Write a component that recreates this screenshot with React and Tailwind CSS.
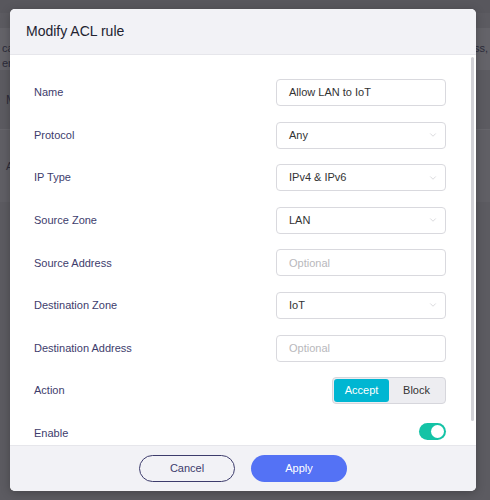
import { ChevronDown } from 'lucide-react';

const font = { fontFamily: '"Liberation Sans", Arial, sans-serif' };

function SelectBox({ value }) {
  return (
    <div className="w-[170px] h-[27px] border border-[#d9d9de] rounded-[4px] bg-white flex items-center justify-between pl-[12px] pr-[7px]">
      <span className="text-[11px] text-[#333333]">{value}</span>
      <ChevronDown className="w-[10px] h-[10px] text-[#c4c4c8]" strokeWidth={1.5} />
    </div>
  );
}

function TextBox({ value, placeholder }) {
  return (
    <div className="w-[170px] h-[27px] border border-[#d9d9de] rounded-[4px] bg-white flex items-center pl-[12px]">
      {value ? (
        <span className="text-[11px] text-[#333333]">{value}</span>
      ) : (
        <span className="text-[11px] text-[#b8b8bc]">{placeholder}</span>
      )}
    </div>
  );
}

function Row({ label, children }) {
  return (
    <div className="h-[27px] flex items-center justify-between">
      <span className="text-[11px] text-[#3d3c6c]">{label}</span>
      {children}
    </div>
  );
}

export default function App() {
  return (
    <div className="relative w-[490px] h-[500px] overflow-hidden bg-[#5c5b61]" style={font}>
      {/* dimmed page behind the dialog */}
      <div className="h-[13px] bg-[#58575d]" />
      <div className="h-[15px] bg-[#5c5b61]" />
      <div className="h-[42px] bg-[#646369] flex justify-between pt-[13px] text-[11px] text-[#2c2b3a]">
        <div className="leading-[15px] pl-[2px]">
          <div>ca</div>
          <div>ere</div>
        </div>
        <div className="pr-[2px] leading-[15px]">ss,</div>
      </div>
      <div className="h-[60px] flex items-center pl-[6px] text-[12px] text-[#2c2b3a] border-b border-[#66656b]">M</div>
      <div className="h-[72px] flex items-center pl-[6px] text-[11px] text-[#2c2b3a] bg-[#605f65]">A</div>

      {/* dialog */}
      <div className="absolute left-[10px] top-[9px] w-[466px] h-[482px] rounded-[5px] bg-white shadow-[0_2px_10px_rgba(0,0,0,0.25)] flex flex-col overflow-hidden">
        <div className="h-[46px] shrink-0 bg-[#f2f2f6] flex items-center pl-[16px] border-b border-[#e6e6eb]">
          <span className="text-[14px] text-[#222230]">Modify ACL rule</span>
        </div>

        <div className="relative flex-1 overflow-hidden">
          <div className="flex flex-col gap-[15.6px] pt-[24px] pl-[24px] pr-[30px]">
            <Row label="Name">
              <TextBox value="Allow LAN to IoT" />
            </Row>
            <Row label="Protocol">
              <SelectBox value="Any" />
            </Row>
            <Row label="IP Type">
              <SelectBox value="IPv4 & IPv6" />
            </Row>
            <Row label="Source Zone">
              <SelectBox value="LAN" />
            </Row>
            <Row label="Source Address">
              <TextBox placeholder="Optional" />
            </Row>
            <Row label="Destination Zone">
              <SelectBox value="IoT" />
            </Row>
            <Row label="Destination Address">
              <TextBox placeholder="Optional" />
            </Row>
            <Row label="Action">
              <div className="w-[114px] h-[27px] rounded-[4px] border border-[#d6d6dc] bg-[#ededf1] flex items-center p-[1px]">
                <div className="w-[55px] h-[23px] rounded-[3px] bg-[#00b6d2] text-white text-[11px] flex items-center justify-center">
                  Accept
                </div>
                <div className="flex-1 text-center text-[11px] text-[#333333]">Block</div>
              </div>
            </Row>
            <Row label="Enable">
              <div className="w-[27px] h-[17px] mb-[3px] rounded-full bg-[#14c3a6] flex items-center justify-end pr-[2px]">
                <div className="w-[13px] h-[13px] rounded-full bg-white" />
              </div>
            </Row>
          </div>
          {/* scrollbar */}
          <div className="absolute right-[2px] top-[2px] w-[3px] h-[364px] rounded-full bg-[#d2d2d7]" />
        </div>

        <div className="h-[46px] shrink-0 bg-[#f2f2f6] border-t border-[#e6e6eb] flex items-center justify-center gap-[16px]">
          <button className="w-[96px] h-[27px] rounded-full border border-[#3d3c6c] text-[11px] text-[#3d3c6c] bg-transparent">
            Cancel
          </button>
          <button className="w-[96px] h-[27px] rounded-full bg-[#5472f5] text-[11px] text-white">
            Apply
          </button>
        </div>
      </div>
    </div>
  );
}
